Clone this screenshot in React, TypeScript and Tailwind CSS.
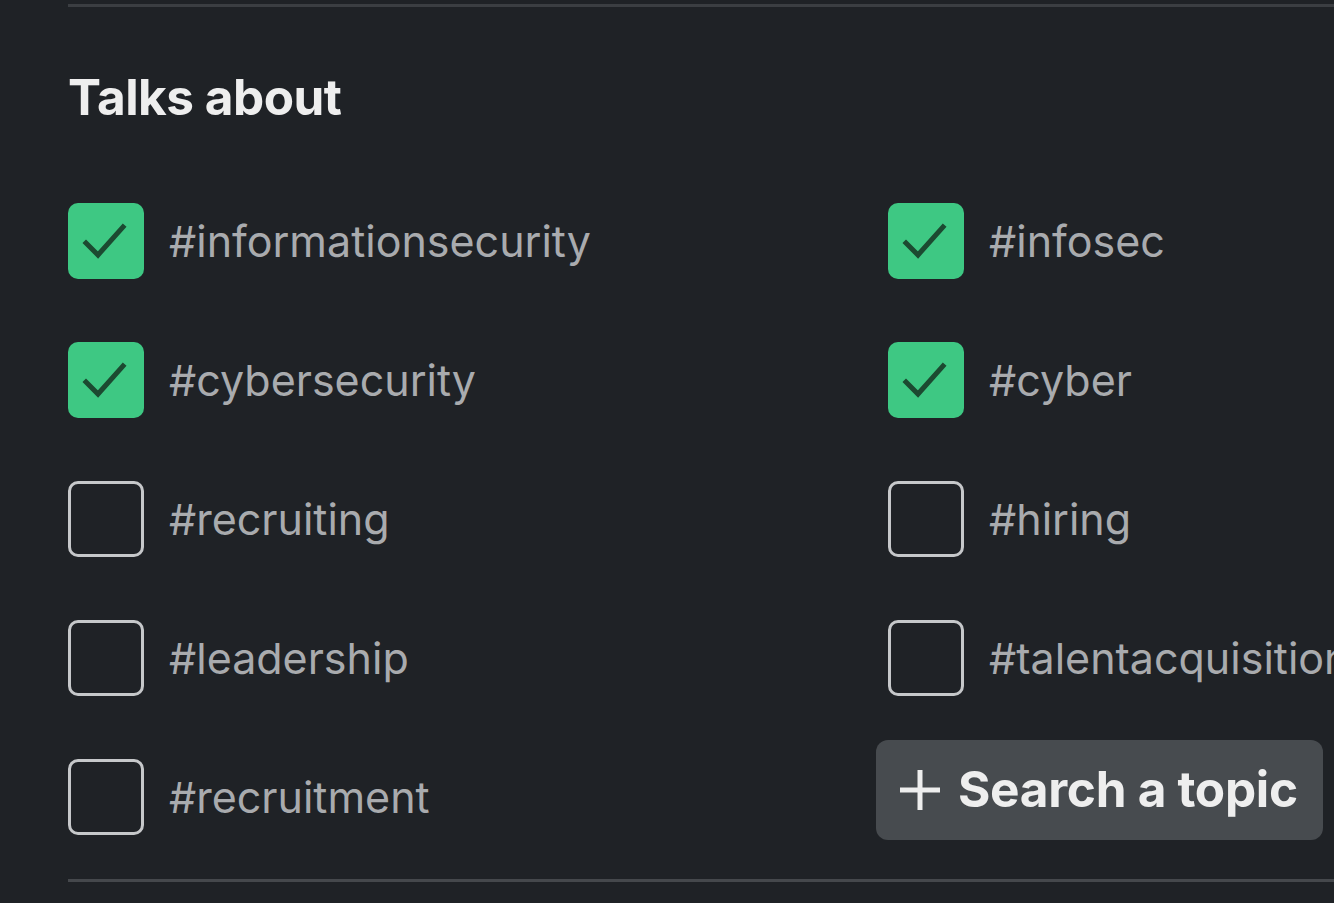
import React from "react";

const items: { label: string; checked: boolean }[][] = [
  [
    { label: "#informationsecurity", checked: true },
    { label: "#infosec", checked: true },
  ],
  [
    { label: "#cybersecurity", checked: true },
    { label: "#cyber", checked: true },
  ],
  [
    { label: "#recruiting", checked: false },
    { label: "#hiring", checked: false },
  ],
  [
    { label: "#leadership", checked: false },
    { label: "#talentacquisition", checked: false },
  ],
];

function Box({ checked }: { checked: boolean }) {
  if (checked) {
    return (
      <div className="w-[76px] h-[76px] shrink-0 rounded-[10px] bg-[#3ec883] flex items-center justify-center">
        <svg width="48" height="48" viewBox="0 0 48 48" fill="none">
          <path d="M4 26 L16 38 L41 10" stroke="#1c4a31" strokeWidth="5" strokeLinecap="square" strokeLinejoin="miter" />
        </svg>
      </div>
    );
  }
  return <div className="w-[76px] h-[76px] shrink-0 rounded-[10px] border-[3px] border-[#c6c8ca]" />;
}

function Item({ label, checked }: { label: string; checked: boolean }) {
  return (
    <div className="flex items-center gap-[25px] h-[76px] whitespace-nowrap">
      <Box checked={checked} />
      <span className="text-[43px] text-[#a9abae] leading-none">{label}</span>
    </div>
  );
}

export default function App() {
  return (
    <div
      className="w-[1334px] h-[903px] bg-[#1f2226] overflow-hidden pl-[68px] pt-[4px]"
      style={{ fontFamily: "Inter, 'Noto Sans', sans-serif" }}
    >
      <div className="h-[3px] bg-[#3b3e42]" />
      <h2 className="mt-[60px] text-[49.5px] font-bold text-[#eeeeee] leading-[60px] tracking-[-0.5px]">Talks about</h2>
      <div className="mt-[76px] flex flex-col gap-[63px]">
        {items.map((row, i) => (
          <div key={i} className="grid grid-cols-[820px_1fr]">
            <Item {...row[0]} />
            <Item {...row[1]} />
          </div>
        ))}
        <div className="grid grid-cols-[808px_1fr]">
          <Item label="#recruitment" checked={false} />
          <div className="-mt-[19px] h-[100px] w-[447px] rounded-[12px] bg-[#474b4f] flex items-center pl-[24px] gap-[18px]">
            <svg width="40" height="40" viewBox="0 0 40 40">
              <path d="M20 0 V40 M0 20 H40" stroke="#eeeeee" strokeWidth="5" />
            </svg>
            <span className="text-[49.5px] font-bold text-[#eeeeee] leading-none tracking-[-0.3px]">Search a topic</span>
          </div>
        </div>
      </div>
      <div className="mt-[39px] h-[3px] bg-[#45484c]" />
    </div>
  );
}
